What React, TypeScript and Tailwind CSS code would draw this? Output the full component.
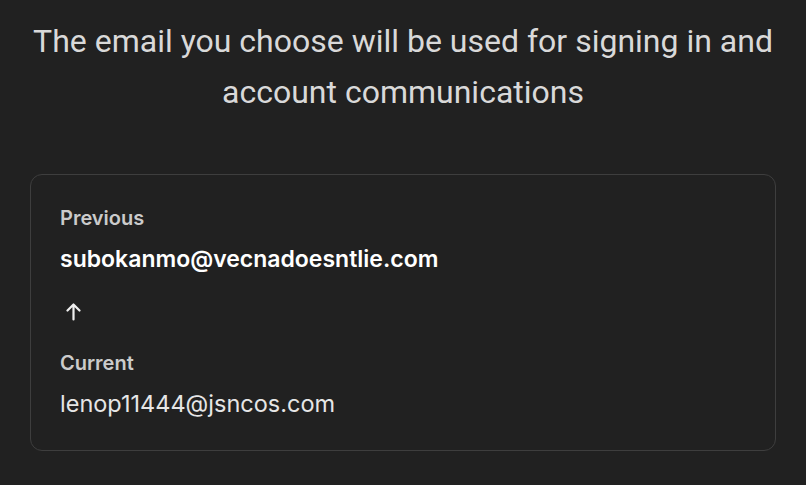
export default function App() {
  return (
    <div className="w-[806px] h-[485px] bg-[#212121] overflow-hidden">
      <p
        className="pt-[16px] px-4 text-center text-[32px] leading-[51px] text-[#d9d9d9]"
        style={{ fontFamily: "Roboto, sans-serif" }}
      >
        The email you choose will be used for signing in and account communications
      </p>

      <div
        className="mx-[30px] mt-[56px] h-[277px] rounded-[12px] border border-[#3e3e3e] pl-[29px] pt-[31px]"
        style={{ fontFamily: "Inter, sans-serif" }}
      >
        <div className="text-[20px] leading-[24px] font-semibold text-[#cbcbcb]">Previous</div>
        <div className="mt-[15px] text-[23px] leading-[28px] font-semibold text-white">
          subokanmo@vecnadoesntlie.com
        </div>
        <div className="mt-[30px] ml-[5px] text-[#f0f0f0]">
          <svg width="17" height="18" viewBox="0 0 17 18" fill="none" stroke="currentColor" strokeWidth="2.2" strokeLinecap="round" strokeLinejoin="round">
            <path d="M8.5 16.5V1.5M2.5 7.5L8.5 1.5 14.5 7.5" />
          </svg>
        </div>
        <div className="mt-[30px] text-[20px] leading-[24px] font-semibold text-[#cbcbcb]">Current</div>
        <div className="mt-[15px] text-[23.5px] leading-[28px] text-[#e6e6e6]">lenop11444@jsncos.com</div>
      </div>
    </div>
  );
}
